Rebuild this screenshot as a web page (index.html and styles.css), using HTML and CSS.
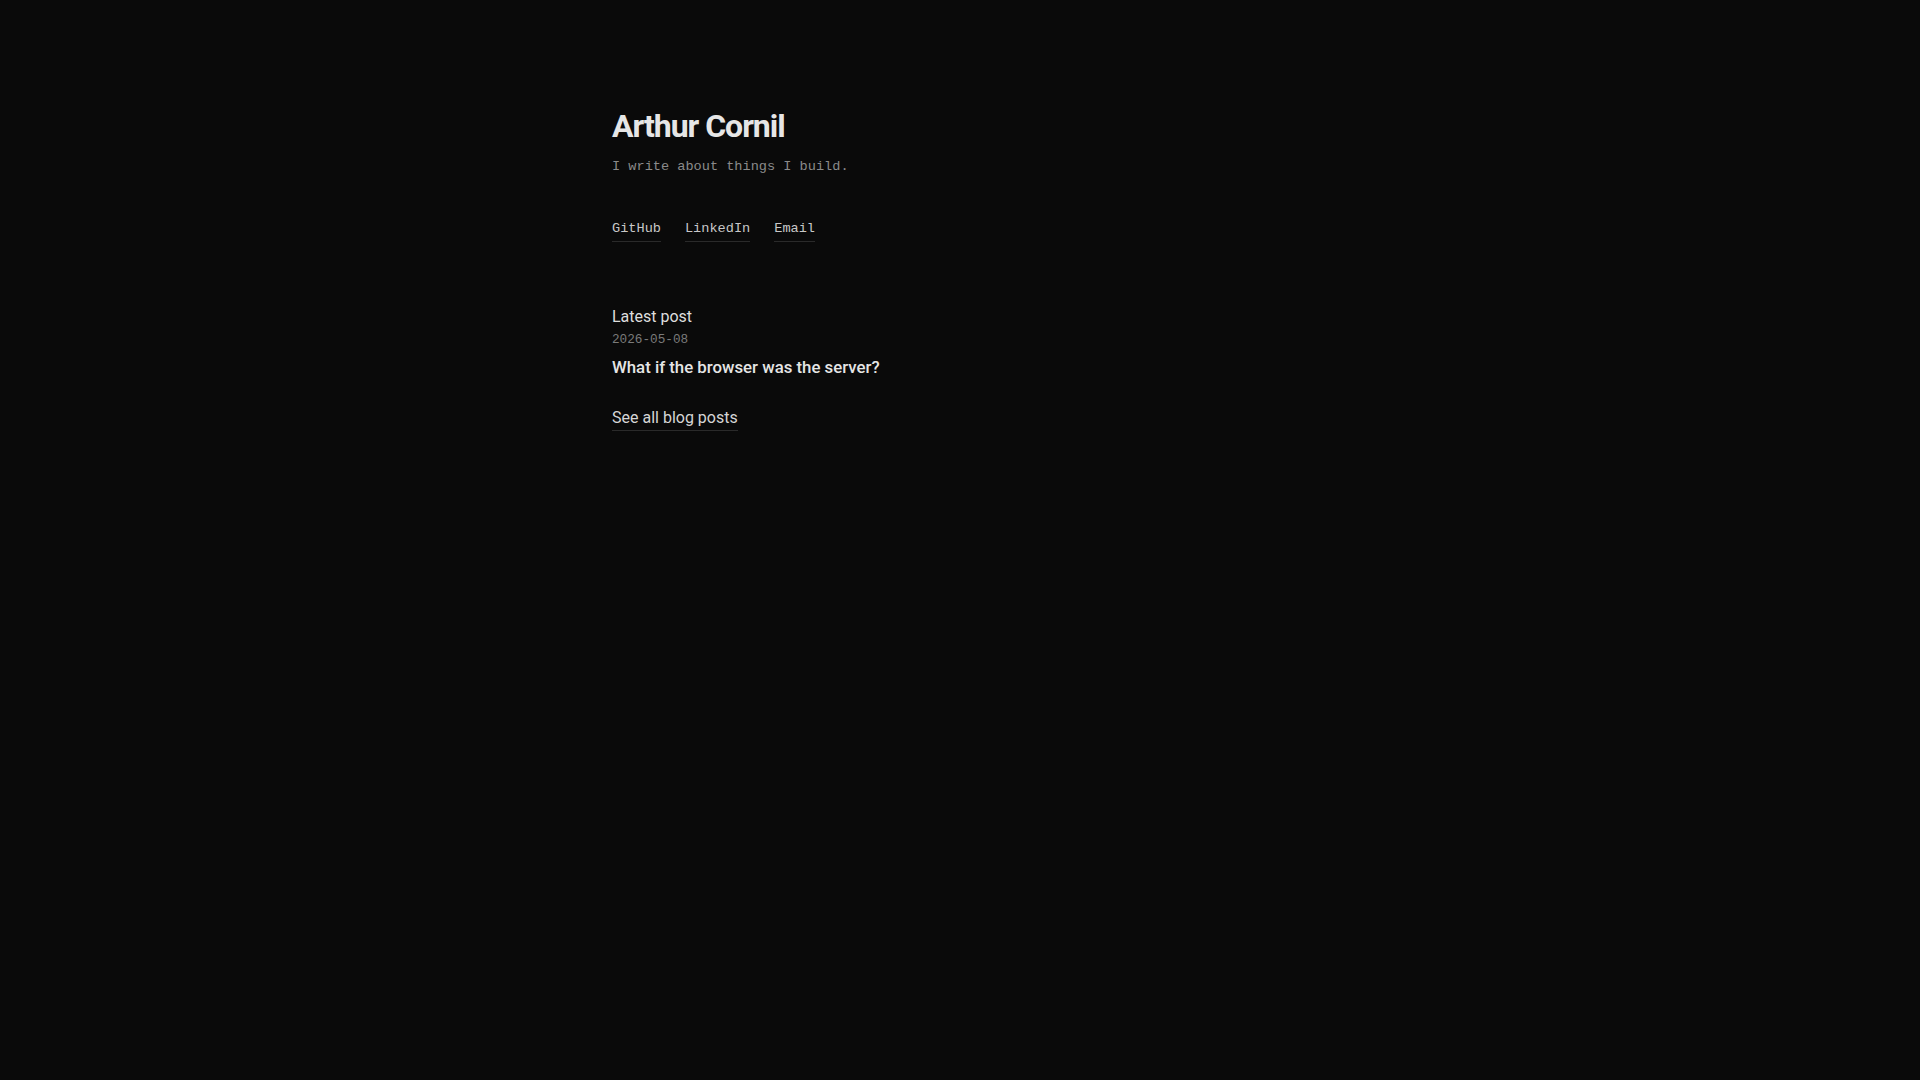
FILE: index.html
```html
<!DOCTYPE html>
<html lang="en">
<head>
<meta charset="utf-8">
<title>Arthur Cornil</title>
<link rel="stylesheet" href="styles.css">
</head>
<body>
<main class="page">
  <header class="intro">
    <h1 class="name">Arthur Cornil</h1>
    <p class="tagline">I write about things I build.</p>
    <nav class="links">
      <a href="#">GitHub</a>
      <a href="#">LinkedIn</a>
      <a href="#">Email</a>
    </nav>
  </header>
  <section class="latest">
    <h2 class="latest-label">Latest post</h2>
    <time class="date">2026-05-08</time>
    <a class="post-title" href="#">What if the browser was the server?</a>
    <a class="all-posts" href="#">See all blog posts</a>
  </section>
</main>
</body>
</html>
```
FILE: styles.css
```css
html, body {
  margin: 0;
  padding: 0;
  background: #0a0a0a;
  height: 100%;
}
body {
  font-family: Roboto, "Noto Sans", sans-serif;
  color: #e5e5e5;
}
.page {
  width: 696px;
  margin: 0 auto;
  padding-top: 106px;
  display: flex;
  flex-direction: column;
}
.intro {
  display: flex;
  flex-direction: column;
}
.name {
  margin: 0;
  font-size: 32px;
  line-height: 40px;
  font-weight: 700;
  letter-spacing: -0.032em;
  color: #e6e6e6;
}
.tagline {
  margin: 11px 0 0;
  font-family: "Liberation Mono", monospace;
  font-size: 13.6px;
  line-height: 20px;
  color: #8a8a8a;
}
.links {
  margin-top: 42px;
  display: flex;
  gap: 24px;
  font-family: "Liberation Mono", monospace;
  font-size: 13.6px;
  line-height: 20px;
}
.links a {
  color: #c8c8c8;
  text-decoration: none;
  border-bottom: 1px solid #2a2a2a;
  padding-bottom: 2px;
}
.latest {
  margin-top: 63px;
  display: flex;
  flex-direction: column;
  align-items: flex-start;
}
.latest-label {
  margin: 0;
  font-size: 16px;
  line-height: 24px;
  font-weight: 400;
  color: #dedede;
}
.date {
  margin-top: 2px;
  font-family: "Liberation Mono", monospace;
  font-size: 12.7px;
  line-height: 18px;
  color: #7a7a7a;
}
.post-title {
  margin-top: 6px;
  font-size: 16.8px;
  line-height: 24px;
  font-weight: 500;
  color: #e5e5e5;
  text-decoration: none;
}
.all-posts {
  margin-top: 27px;
  font-size: 16px;
  line-height: 24px;
  color: #d6d6d6;
  text-decoration: none;
  border-bottom: 1px solid #2a2a2a;
}
```
